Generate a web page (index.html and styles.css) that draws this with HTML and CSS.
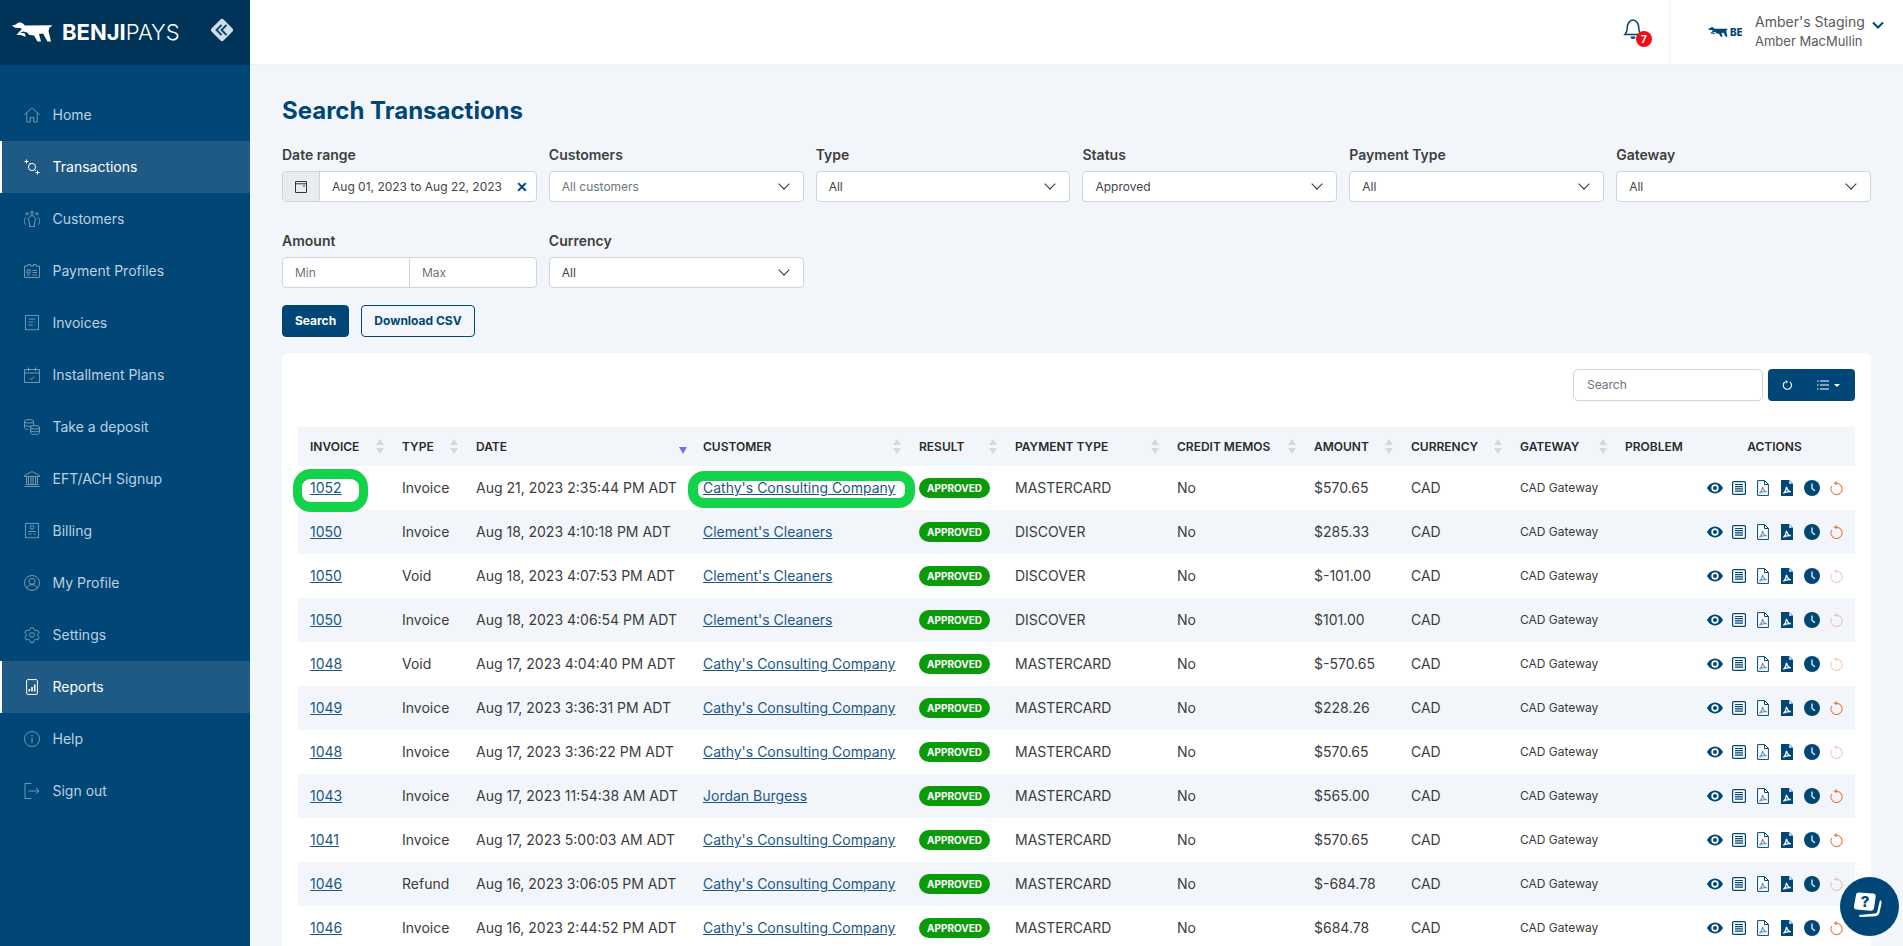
FILE: index.html
```html
<!DOCTYPE html>
<html lang="en">
<head>
<meta charset="utf-8">
<title>Search Transactions</title>
<link rel="stylesheet" href="styles.css">
</head>
<body>
<svg class="defs" width="0" height="0" aria-hidden="true">
  <symbol id="dog" viewBox="0 0 40 20"><path d="M0 3.5 4 2.6 5.5 1 8.5.2 11 1.4 13 3.6 39.500 3.300 40 4 37.500 5.500 36.500 9 39 19.500 35.500 19.500 31 11.500 27 12 29 19.500 25.500 19.500 22 13.500 17.500 13 15 10.500 11.500 9.500 8 10.500 13 11.500 13.500 15 11.500 14 8.500 13 4.500 13 8 9 10 7 8 6 3 5.800Z"/></symbol>
  <symbol id="i-eye" viewBox="0 0 16 12"><path d="M8 .5C4.500.5 1.700 2.600 0 6c1.700 3.400 4.500 5.500 8 5.500s6.300-2.100 8-5.500C14.300 2.600 11.500.5 8 .5Zm0 9.200A3.700 3.700 0 1 1 8 2.300a3.700 3.700 0 0 1 0 7.400Zm0-5.700a2 2 0 1 0 0 4 2 2 0 0 0 0-4Z"/></symbol>
  <symbol id="i-list" viewBox="0 0 14 14"><rect x=".6" y=".6" width="12.800" height="12.800" rx="1" fill="#fff" stroke="currentColor" stroke-width="1.200"/><path d="M3 3.500h8M3 5.700h8M3 7.900h8M3 10.100h8" stroke="currentColor" stroke-width="1.200"/></symbol>
  <symbol id="i-pdf" viewBox="0 0 12 16"><path d="M.6.6h7l3.800 3.800v11H.6Z" fill="#fff" stroke="currentColor"/><path d="M7.500.6v3.900h3.900" fill="none" stroke="currentColor"/><path d="M2.300 13.300c1.500-1 2.700-3.500 3.200-6.500.5 2.500 2 4.500 4.300 5-2.300-.3-5.300 0-7.500 1.500Z" fill="none" stroke="#7d95ab" stroke-width="1.200"/></symbol>
  <symbol id="i-pdf2" viewBox="0 0 12 16"><path d="M0 0h8l4 4v12H0Z" fill="currentColor"/><path d="M8.200.8v3h3" fill="#fff"/><path d="M2.300 13.300c1.500-1 2.700-3.500 3.200-6.500.5 2.500 2 4.500 4.300 5-2.300-.3-5.300 0-7.500 1.500Z" fill="none" stroke="#fff" stroke-width="1.300"/></symbol>
  <symbol id="i-clock" viewBox="0 0 16 16"><circle cx="8" cy="8" r="8" fill="currentColor"/><path d="M8 3.500v5l3 2.200" fill="none" stroke="#fff" stroke-width="1.200"/></symbol>
  <symbol id="i-undo" viewBox="0 0 13 14"><path d="M6.500 2.300a5.600 5.600 0 1 1-4.800 2.800" fill="none" stroke="#f0764a" stroke-width="1.100"/><path d="M6.800 0v4.300L3.500 2.200Z" fill="#f0764a"/></symbol>
  <symbol id="n-home" viewBox="0 0 16 16"><path d="M.5 7.800 8 .8l7.500 7M2.800 6v9h3.400v-4.500h3.600V15h3.400V6" fill="none" stroke="currentColor" stroke-width=".8"/></symbol>
  <symbol id="n-tx" viewBox="0 0 16 16"><circle cx="8" cy="8" r="3.600" fill="none" stroke="currentColor"/><path d="M.5 2.500h4M2.500.5v4M11.500 13.500h4M13.500 11.500v4M5 4l.6.700M11 11l.6.600" fill="none" stroke="currentColor"/></symbol>
  <symbol id="n-cust" viewBox="0 0 16 16"><g fill="none" stroke="currentColor" stroke-width=".8"><circle cx="8" cy="1.800" r="1.400"/><circle cx="3" cy="2.800" r="1.100"/><circle cx="13" cy="2.800" r="1.100"/><path d="M5.500 15.500V12L4.600 9a3.500 3.500 0 1 1 6.800 0l-.9 3v3.500ZM2.300 6C.3 8-.3 11 1.500 13.500M13.700 6c2 2 2.600 5 .8 7.500"/></g></symbol>
  <symbol id="n-card" viewBox="0 0 16 14"><g fill="none" stroke="currentColor" stroke-width=".8"><path d="M.5 2h3.500V.5h2.500V2h3V.5h2.500V2h3.500v11.500H.5Z"/><rect x="3" y="6" width="3" height="3"/><path d="M3 11h3M8.500 6.500h4.500M8.500 8.500h4.500M8.500 11h4.500"/></g></symbol>
  <symbol id="n-inv" viewBox="0 0 14 16"><g fill="none" stroke="currentColor" stroke-width=".8"><path d="M.5.500h13V15l-1.600-.8-1.700.8-1.600-.8-1.600.8-1.600-.8-1.700.8-1.600-.8-1.600.8Z"/><path d="M3.500 4h7M3.500 7h4.500M9.500 7h1M3.500 10h4.500M9.500 10h1"/></g></symbol>
  <symbol id="n-cal" viewBox="0 0 16 16"><g fill="none" stroke="currentColor" stroke-width=".8"><path d="M.5 2.500h15v13H.5ZM.5 6h15M4.500.5v3.500M11.500.5v3.500"/><path d="m5.800 11 1.500 1.500 3-3"/></g></symbol>
  <symbol id="n-coins" viewBox="0 0 16 16"><g fill="none" stroke="currentColor" stroke-width=".8"><ellipse cx="5" cy="2.300" rx="4.500" ry="1.800"/><path d="M.5 2.300v6.400c0 1 1.500 1.800 3.500 1.800M9.500 2.300v4M.5 5.500c0 1 1.500 1.800 4.500 1.800 1.200 0 2-.2 2.500-.4"/><ellipse cx="11" cy="8.300" rx="4.500" ry="1.800"/><path d="M6.500 8.300v5.400c0 1 2 1.800 4.500 1.800s4.500-.8 4.500-1.800V8.300M6.500 11c0 1 2 1.800 4.500 1.800s4.500-.8 4.500-1.800"/></g></symbol>
  <symbol id="n-bank" viewBox="0 0 16 16"><g fill="none" stroke="currentColor" stroke-width=".8"><path d="M.5 4.500 8 .5l7.500 4v1H.5ZM.5 15.500h15M1.500 13.500h13"/><path d="M2.500 6v7M4.500 6v7M7 6v7M9 6v7M11.500 6v7M13.500 6v7"/></g></symbol>
  <symbol id="n-bill" viewBox="0 0 14 16"><g fill="none" stroke="currentColor" stroke-width=".8"><path d="M.5.500h13V15l-1.600-.8-1.700.8-1.600-.8-1.600.8-1.600-.8-1.700.8-1.600-.8-1.600.8Z"/><circle cx="7" cy="4.500" r="1.800"/><path d="M3 8.500h8M3.500 11h3M8.500 11h2"/></g></symbol>
  <symbol id="n-user" viewBox="0 0 16 16"><g fill="none" stroke="currentColor" stroke-width=".8"><circle cx="8" cy="8" r="7.500"/><circle cx="8" cy="6.300" r="3"/><path d="M3 13.500c.5-2.800 2.500-3.800 5-3.800s4.500 1 5 3.800"/></g></symbol>
  <symbol id="n-gear" viewBox="0 0 16 16"><g fill="none" stroke="currentColor" stroke-width=".8"><path d="m6.500.8 3 0 .5 2 1.800 1 2-.6 1.400 2.600-1.500 1.400v1.800l1.500 1.400-1.400 2.600-2-.6-1.800 1-.5 2h-3l-.5-2-1.800-1-2 .6-1.400-2.600 1.500-1.400V7.200L.8 5.800l1.400-2.600 2 .6 1.800-1Z"/><circle cx="8" cy="8" r="2.400"/></g></symbol>
  <symbol id="n-rep" viewBox="0 0 12 16"><rect x=".6" y=".6" width="10.800" height="14.800" rx="1.200" fill="none" stroke="currentColor" stroke-width="1"/><path d="M2.500 10h1.600v2.500H2.500ZM5.200 8h1.600v4.500H5.200ZM7.900 5.500h1.600v7H7.900Z" fill="currentColor"/></symbol>
  <symbol id="n-info" viewBox="0 0 16 16"><g fill="none" stroke="currentColor" stroke-width=".8"><circle cx="8" cy="8" r="7.500"/><path d="M8 7v5M8 4v1.400" stroke-width="1"/></g></symbol>
  <symbol id="n-out" viewBox="0 0 15 16"><path d="M7 .5H.5v15H7M4 8h10.500M11.500 5l3 3-3 3" fill="none" stroke="currentColor" stroke-width=".8"/></symbol>
</svg>

<aside class="sidebar">
  <div class="brand">
    <svg class="brand-dog"><use href="#dog"/></svg>
    <span class="brand-name"><b>BENJI</b>PAYS</span>
    <span class="brand-toggle">
      <svg viewBox="0 0 24 24" width="24" height="24"><rect x="3.500" y="3.500" width="17" height="17" rx="2.500" transform="rotate(45 12 12)" fill="#d3dde6"/><path d="M11.500 7 6.500 12l5 5M16.500 7 11.500 12l5 5" fill="none" stroke="#004777" stroke-width="1.800"/></svg>
    </span>
  </div>
  <nav class="nav">
    <a class="nav-item"><svg class="nav-icon"><use href="#n-home"/></svg>Home</a>
    <a class="nav-item active"><svg class="nav-icon"><use href="#n-tx"/></svg>Transactions</a>
    <a class="nav-item"><svg class="nav-icon"><use href="#n-cust"/></svg>Customers</a>
    <a class="nav-item"><svg class="nav-icon"><use href="#n-card"/></svg>Payment Profiles</a>
    <a class="nav-item"><svg class="nav-icon"><use href="#n-inv"/></svg>Invoices</a>
    <a class="nav-item"><svg class="nav-icon"><use href="#n-cal"/></svg>Installment Plans</a>
    <a class="nav-item"><svg class="nav-icon"><use href="#n-coins"/></svg>Take a deposit</a>
    <a class="nav-item"><svg class="nav-icon"><use href="#n-bank"/></svg>EFT/ACH Signup</a>
    <a class="nav-item"><svg class="nav-icon"><use href="#n-bill"/></svg>Billing</a>
    <a class="nav-item"><svg class="nav-icon"><use href="#n-user"/></svg>My Profile</a>
    <a class="nav-item"><svg class="nav-icon"><use href="#n-gear"/></svg>Settings</a>
    <a class="nav-item active"><svg class="nav-icon"><use href="#n-rep"/></svg>Reports</a>
    <a class="nav-item"><svg class="nav-icon"><use href="#n-info"/></svg>Help</a>
    <a class="nav-item"><svg class="nav-icon"><use href="#n-out"/></svg>Sign out</a>
  </nav>
</aside>

<div class="main">
  <header class="topbar">
    <div class="bell">
      <svg viewBox="0 0 20 22" width="20" height="22"><path d="M2 16.500c1.500-1.500 2.200-3 2.200-6.500 0-4 2.300-8 5.800-8s5.800 4 5.800 8c0 3.500.7 5 2.200 6.500Z" fill="none" stroke="#004777" stroke-width="1.500"/><path d="M7.500 18.500a2.500 2.500 0 0 0 5 0Z" fill="#004777"/></svg>
      <span class="bell-badge">7</span>
    </div>
    <div class="account">
      <div class="mini-logo"><svg class="mini-dog"><use href="#dog"/></svg><span class="mini-name">BEN</span></div>
      <div class="account-names"><span class="account-org">Amber's Staging</span><span class="account-user">Amber MacMullin</span></div>
      <svg class="account-chevron" viewBox="0 0 12 8" width="12" height="8"><path d="m1 1.500 5 5 5-5" fill="none" stroke="#004777" stroke-width="2"/></svg>
    </div>
  </header>

  <main class="content">
    <h1 class="title">Search Transactions</h1>
    <div class="filters">
      <div class="field">
        <label class="label">Date range</label>
        <div class="date-group">
          <span class="date-addon"><svg viewBox="0 0 12 13" width="12" height="13"><path d="M.5 1.500h11v11H.5ZM.5 3.800h11M8 6h2" fill="none" stroke="#333" stroke-width="1"/></svg></span>
          <span class="date-value">Aug 01, 2023 to Aug 22, 2023</span>
          <span class="date-clear">✕</span>
        </div>
      </div>
      <div class="field"><label class="label">Customers</label><div class="select muted">All customers</div></div>
      <div class="field"><label class="label">Type</label><div class="select">All</div></div>
      <div class="field"><label class="label">Status</label><div class="select">Approved</div></div>
      <div class="field"><label class="label">Payment Type</label><div class="select">All</div></div>
      <div class="field"><label class="label">Gateway</label><div class="select">All</div></div>
      <div class="field">
        <label class="label">Amount</label>
        <div class="range"><span class="range-part">Min</span><span class="range-part">Max</span></div>
      </div>
      <div class="field"><label class="label">Currency</label><div class="select">All</div></div>
    </div>
    <div class="buttons">
      <button class="btn btn-primary">Search</button>
      <button class="btn btn-outline">Download CSV</button>
    </div>

    <section class="card">
      <div class="toolbar">
        <div class="search">Search</div>
        <div class="tool-group">
          <svg viewBox="0 0 12 12" width="11" height="11"><path d="M8.500 2A4.500 4.500 0 1 1 3 2.200" fill="none" stroke="#fff" stroke-width="1.200"/><path d="M5.500 0v4L8 2Z" fill="#fff" transform="translate(-1.500 0)"/></svg>
          <span class="tool-list">
            <svg viewBox="0 0 12 10" width="12" height="10"><path d="M0 1h1.500M0 5h1.500M0 9h1.500M3 1h9M3 5h9M3 9h9" stroke="#fff" stroke-width="1.200"/></svg>
            <i class="caret"></i>
          </span>
        </div>
      </div>
      <table class="table">
        <colgroup>
          <col class="c1"><col class="c2"><col class="c3"><col class="c4"><col class="c5"><col class="c6"><col class="c7"><col class="c8"><col class="c9"><col class="c10"><col class="c11"><col class="c12">
        </colgroup>
        <thead>
          <tr>
            <th class="sort">Invoice</th><th class="sort">Type</th><th class="sort-desc">Date</th><th class="sort">Customer</th><th class="sort">Result</th><th class="sort">Payment Type</th><th class="sort">Credit Memos</th><th class="sort">Amount</th><th class="sort">Currency</th><th class="sort">Gateway</th><th>Problem</th><th class="center">Actions</th>
          </tr>
        </thead>
        <tbody>
          <tr>
            <td class="ringed"><a href="#">1052</a><span class="ring ring-inv"></span></td><td>Invoice</td><td>Aug 21, 2023 2:35:44 PM ADT</td><td class="ringed"><a href="#">Cathy's Consulting Company</a><span class="ring ring-cust"></span></td><td><span class="badge">Approved</span></td><td>MASTERCARD</td><td>No</td><td>$570.65</td><td>CAD</td><td class="gw">CAD Gateway</td><td></td>
            <td><div class="acts"><svg class="a-eye"><use href="#i-eye"/></svg><svg class="a-list"><use href="#i-list"/></svg><svg class="a-pdf"><use href="#i-pdf"/></svg><svg class="a-pdf"><use href="#i-pdf2"/></svg><svg class="a-clock"><use href="#i-clock"/></svg><svg class="a-undo"><use href="#i-undo"/></svg></div></td>
          </tr>
          <tr>
            <td><a href="#">1050</a></td><td>Invoice</td><td>Aug 18, 2023 4:10:18 PM ADT</td><td><a href="#">Clement's Cleaners</a></td><td><span class="badge">Approved</span></td><td>DISCOVER</td><td>No</td><td>$285.33</td><td>CAD</td><td class="gw">CAD Gateway</td><td></td>
            <td><div class="acts"><svg class="a-eye"><use href="#i-eye"/></svg><svg class="a-list"><use href="#i-list"/></svg><svg class="a-pdf"><use href="#i-pdf"/></svg><svg class="a-pdf"><use href="#i-pdf2"/></svg><svg class="a-clock"><use href="#i-clock"/></svg><svg class="a-undo"><use href="#i-undo"/></svg></div></td>
          </tr>
          <tr>
            <td><a href="#">1050</a></td><td>Void</td><td>Aug 18, 2023 4:07:53 PM ADT</td><td><a href="#">Clement's Cleaners</a></td><td><span class="badge">Approved</span></td><td>DISCOVER</td><td>No</td><td>$-101.00</td><td>CAD</td><td class="gw">CAD Gateway</td><td></td>
            <td><div class="acts"><svg class="a-eye"><use href="#i-eye"/></svg><svg class="a-list"><use href="#i-list"/></svg><svg class="a-pdf"><use href="#i-pdf"/></svg><svg class="a-pdf"><use href="#i-pdf2"/></svg><svg class="a-clock"><use href="#i-clock"/></svg><svg class="a-undo dim"><use href="#i-undo"/></svg></div></td>
          </tr>
          <tr>
            <td><a href="#">1050</a></td><td>Invoice</td><td>Aug 18, 2023 4:06:54 PM ADT</td><td><a href="#">Clement's Cleaners</a></td><td><span class="badge">Approved</span></td><td>DISCOVER</td><td>No</td><td>$101.00</td><td>CAD</td><td class="gw">CAD Gateway</td><td></td>
            <td><div class="acts"><svg class="a-eye"><use href="#i-eye"/></svg><svg class="a-list"><use href="#i-list"/></svg><svg class="a-pdf"><use href="#i-pdf"/></svg><svg class="a-pdf"><use href="#i-pdf2"/></svg><svg class="a-clock"><use href="#i-clock"/></svg><svg class="a-undo dim"><use href="#i-undo"/></svg></div></td>
          </tr>
          <tr>
            <td><a href="#">1048</a></td><td>Void</td><td>Aug 17, 2023 4:04:40 PM ADT</td><td><a href="#">Cathy's Consulting Company</a></td><td><span class="badge">Approved</span></td><td>MASTERCARD</td><td>No</td><td>$-570.65</td><td>CAD</td><td class="gw">CAD Gateway</td><td></td>
            <td><div class="acts"><svg class="a-eye"><use href="#i-eye"/></svg><svg class="a-list"><use href="#i-list"/></svg><svg class="a-pdf"><use href="#i-pdf"/></svg><svg class="a-pdf"><use href="#i-pdf2"/></svg><svg class="a-clock"><use href="#i-clock"/></svg><svg class="a-undo dim"><use href="#i-undo"/></svg></div></td>
          </tr>
          <tr>
            <td><a href="#">1049</a></td><td>Invoice</td><td>Aug 17, 2023 3:36:31 PM ADT</td><td><a href="#">Cathy's Consulting Company</a></td><td><span class="badge">Approved</span></td><td>MASTERCARD</td><td>No</td><td>$228.26</td><td>CAD</td><td class="gw">CAD Gateway</td><td></td>
            <td><div class="acts"><svg class="a-eye"><use href="#i-eye"/></svg><svg class="a-list"><use href="#i-list"/></svg><svg class="a-pdf"><use href="#i-pdf"/></svg><svg class="a-pdf"><use href="#i-pdf2"/></svg><svg class="a-clock"><use href="#i-clock"/></svg><svg class="a-undo"><use href="#i-undo"/></svg></div></td>
          </tr>
          <tr>
            <td><a href="#">1048</a></td><td>Invoice</td><td>Aug 17, 2023 3:36:22 PM ADT</td><td><a href="#">Cathy's Consulting Company</a></td><td><span class="badge">Approved</span></td><td>MASTERCARD</td><td>No</td><td>$570.65</td><td>CAD</td><td class="gw">CAD Gateway</td><td></td>
            <td><div class="acts"><svg class="a-eye"><use href="#i-eye"/></svg><svg class="a-list"><use href="#i-list"/></svg><svg class="a-pdf"><use href="#i-pdf"/></svg><svg class="a-pdf"><use href="#i-pdf2"/></svg><svg class="a-clock"><use href="#i-clock"/></svg><svg class="a-undo dim"><use href="#i-undo"/></svg></div></td>
          </tr>
          <tr>
            <td><a href="#">1043</a></td><td>Invoice</td><td>Aug 17, 2023 11:54:38 AM ADT</td><td><a href="#">Jordan Burgess</a></td><td><span class="badge">Approved</span></td><td>MASTERCARD</td><td>No</td><td>$565.00</td><td>CAD</td><td class="gw">CAD Gateway</td><td></td>
            <td><div class="acts"><svg class="a-eye"><use href="#i-eye"/></svg><svg class="a-list"><use href="#i-list"/></svg><svg class="a-pdf"><use href="#i-pdf"/></svg><svg class="a-pdf"><use href="#i-pdf2"/></svg><svg class="a-clock"><use href="#i-clock"/></svg><svg class="a-undo"><use href="#i-undo"/></svg></div></td>
          </tr>
          <tr>
            <td><a href="#">1041</a></td><td>Invoice</td><td>Aug 17, 2023 5:00:03 AM ADT</td><td><a href="#">Cathy's Consulting Company</a></td><td><span class="badge">Approved</span></td><td>MASTERCARD</td><td>No</td><td>$570.65</td><td>CAD</td><td class="gw">CAD Gateway</td><td></td>
            <td><div class="acts"><svg class="a-eye"><use href="#i-eye"/></svg><svg class="a-list"><use href="#i-list"/></svg><svg class="a-pdf"><use href="#i-pdf"/></svg><svg class="a-pdf"><use href="#i-pdf2"/></svg><svg class="a-clock"><use href="#i-clock"/></svg><svg class="a-undo"><use href="#i-undo"/></svg></div></td>
          </tr>
          <tr>
            <td><a href="#">1046</a></td><td>Refund</td><td>Aug 16, 2023 3:06:05 PM ADT</td><td><a href="#">Cathy's Consulting Company</a></td><td><span class="badge">Approved</span></td><td>MASTERCARD</td><td>No</td><td>$-684.78</td><td>CAD</td><td class="gw">CAD Gateway</td><td></td>
            <td><div class="acts"><svg class="a-eye"><use href="#i-eye"/></svg><svg class="a-list"><use href="#i-list"/></svg><svg class="a-pdf"><use href="#i-pdf"/></svg><svg class="a-pdf"><use href="#i-pdf2"/></svg><svg class="a-clock"><use href="#i-clock"/></svg><svg class="a-undo dim"><use href="#i-undo"/></svg></div></td>
          </tr>
          <tr>
            <td><a href="#">1046</a></td><td>Invoice</td><td>Aug 16, 2023 2:44:52 PM ADT</td><td><a href="#">Cathy's Consulting Company</a></td><td><span class="badge">Approved</span></td><td>MASTERCARD</td><td>No</td><td>$684.78</td><td>CAD</td><td class="gw">CAD Gateway</td><td></td>
            <td><div class="acts"><svg class="a-eye"><use href="#i-eye"/></svg><svg class="a-list"><use href="#i-list"/></svg><svg class="a-pdf"><use href="#i-pdf"/></svg><svg class="a-pdf"><use href="#i-pdf2"/></svg><svg class="a-clock"><use href="#i-clock"/></svg><svg class="a-undo"><use href="#i-undo"/></svg></div></td>
          </tr>
        </tbody>
      </table>
    </section>
  </main>
</div>

<button class="help" aria-label="Help">
  <svg viewBox="0 0 32 32" width="32" height="32"><path d="M27 10c1.500 1 1.800 2 1.500 3.500l-2 9c-.5 2-1.800 3.500-4 3.800L8 27c-1.500 0-2-1-2-2l16-1.500c1.500-.2 2-.8 2.400-2.500Z" fill="#fff"/><path d="M6 2.500 20 3.500c2 .2 3 1.300 2.700 3.300L21 18c-.3 1.700-1.400 2.800-3.200 2.700L3.500 19.500c-1.800-.2-2.800-1.300-2.500-3.300L3 5c.3-1.700 1.300-2.700 3-2.500Z" fill="#fff"/><text x="12" y="17" class="help-q">?</text></svg>
</button>
</body>
</html>
```
FILE: styles.css
```css
* { box-sizing: border-box; }
html, body { height: 100%; }
body {
  margin: 0;
  display: flex;
  height: 100vh;
  overflow: hidden;
  background: #f2f5f9;
  font-family: Inter, "Liberation Sans", sans-serif;
  font-size: 14px;
  color: #333;
}
.defs { position: absolute; }

/* Sidebar */
.sidebar { width: 250px; flex: none; background: #004777; }
.brand {
  height: 65px;
  background: #003559;
  display: flex;
  align-items: center;
  padding-left: 12px;
  color: #fff;
}
.brand-dog { width: 40px; height: 20px; fill: #fff; flex: none; margin-top: -1px; }
.brand-name { margin-left: 10px; font-size: 22px; font-weight: 300; width: 148px; flex: none; margin-top: -2px; }
.brand-name b { font-weight: 700; }
.brand-toggle { display: flex; margin-top: -6px; }
.nav { padding-top: 24px; display: flex; flex-direction: column; }
.nav-item {
  height: 52px;
  display: flex;
  align-items: center;
  padding: 0 0 1px 24px;
  gap: 12.500px;
  color: #bdd0e0;
  font-weight: 400;
  font-size: 14px;
}
.nav-item.active { background: #1e5a83; color: #fff; border-left: 2px solid #fff; padding-left: 22px; }
.nav-icon { width: 16px; height: 16px; flex: none; color: #8eacc4; }
.active .nav-icon { color: #fff; }

/* Top bar */
.main { flex: 1; min-width: 0; display: flex; flex-direction: column; }
.topbar {
  height: 65px;
  flex: none;
  background: #fff;
  display: flex;
  justify-content: flex-end;
  border-bottom: 1px solid #eef1f5;
}
.bell { width: 72px; position: relative; display: flex; align-items: flex-start; padding: 18px 0 0 26px; }
.bell-badge {
  position: absolute;
  left: 39px;
  top: 31px;
  width: 16px;
  height: 16px;
  border-radius: 50%;
  background: #ee0f1c;
  color: #fff;
  font-size: 10px;
  font-weight: 700;
  line-height: 16px;
  text-align: center;
}
.account {
  width: 234px;
  border-left: 1px solid #eef1f5;
  display: flex;
  align-items: center;
  padding-left: 38px;
}
.mini-logo { width: 34px; height: 12px; overflow: hidden; display: flex; align-items: center; gap: 2px; color: #004777; flex: none; }
.mini-dog { width: 20px; height: 10px; fill: #004777; flex: none; }
.mini-name { font-size: 10px; font-weight: 800; }
.account-names { display: flex; flex-direction: column; margin-left: 13px; width: 116px; flex: none; color: #5b5b5b; margin-top: -2px; }
.account-org { font-size: 14px; line-height: 20px; }
.account-user { font-size: 13px; line-height: 19px; }
.account-chevron { margin-top: -15px; margin-left: 1px; flex: none; }

/* Filters */
.content { padding: 31px 32px 0; }
.title { margin: 0; font-size: 24px; line-height: 29px; font-weight: 700; color: #004777; }
.filters {
  margin-top: 21px;
  display: grid;
  grid-template-columns: repeat(6, minmax(0, 1fr));
  column-gap: 12px;
  row-gap: 30px;
}
.label { display: block; font-size: 14px; font-weight: 600; line-height: 17px; margin-bottom: 8px; color: #3f3f3f; }
.select, .date-group, .range {
  height: 31px;
  background: #fff;
  border: 1px solid #ced4da;
  border-radius: 4px;
  font-size: 12px;
  display: flex;
  align-items: center;
}
.select {
  padding-left: 12px;
  position: relative;
  color: #444;
}
.select.muted { color: #6c757d; }
.select::after {
  content: "";
  position: absolute;
  right: 15px;
  top: 8px;
  width: 7px;
  height: 7px;
  border-right: 1.500px solid #333;
  border-bottom: 1.500px solid #333;
  transform: rotate(45deg);
}
.date-group { overflow: hidden; color: #444; }
.date-addon {
  width: 37px;
  height: 100%;
  flex: none;
  background: #e9ecef;
  border-right: 1px solid #ced4da;
  display: flex;
  align-items: center;
  justify-content: center;
}
.date-value { margin-left: 12px; white-space: nowrap; }
.date-clear { margin-left: auto; margin-right: 8px; color: #004777; font-weight: 800; font-size: 14px; }
.range-part { flex: 1; padding-left: 12px; color: #6c757d; line-height: 29px; }
.range-part + .range-part { border-left: 1px solid #ced4da; }
.buttons { margin-top: 17px; display: flex; gap: 12px; }
.btn {
  height: 32px;
  border-radius: 4px;
  font-family: inherit;
  font-size: 12px;
  font-weight: 700;
  padding: 0 0 1px;
}
.btn-primary { width: 67px; background: #004777; color: #fff; border: 1px solid #004777; }
.btn-outline { width: 114px; background: transparent; color: #004777; border: 1px solid #004777; }

/* Card and table */
.card { margin-top: 16px; background: #fff; border-radius: 6px; padding: 16px; }
.toolbar { display: flex; justify-content: flex-end; gap: 5px; margin-bottom: 26px; }
.search {
  width: 190px;
  height: 32px;
  border: 1px solid #ced4da;
  border-radius: 5px;
  padding-left: 13px;
  line-height: 30px;
  font-size: 12px;
  color: #6c757d;
}
.tool-group {
  width: 87px;
  height: 32px;
  border-radius: 4px;
  background: #004777;
  display: flex;
  align-items: center;
  padding-left: 14px;
}
.tool-list { display: flex; align-items: center; gap: 5px; margin-left: 24px; }
.caret { width: 0; height: 0; border-left: 3px solid transparent; border-right: 3px solid transparent; border-top: 3px solid #fff; }
.table { width: 100%; table-layout: fixed; border-collapse: collapse; }
.c1 { width: 92px; } .c2 { width: 74px; } .c3 { width: 227px; } .c4 { width: 216px; }
.c5 { width: 96px; } .c6 { width: 162px; } .c7 { width: 137px; } .c8 { width: 97px; }
.c9 { width: 109px; } .c10 { width: 105px; } .c11 { width: 74px; } .c12 { width: 168px; }
th {
  height: 39px;
  padding: 0 12px;
  background: #f2f5f9;
  text-align: left;
  text-transform: uppercase;
  font-size: 12px;
  font-weight: 600;
  color: #2b2b2b;
  white-space: nowrap;
  position: relative;
}
th.center { text-align: center; padding-left: 7px; padding-right: 0; }
.sort::before, .sort::after, .sort-desc::after {
  content: "";
  position: absolute;
  right: 6px;
  border-left: 4px solid transparent;
  border-right: 4px solid transparent;
}
.sort::before { top: 12px; border-bottom: 6px solid #d5d8dc; }
.sort::after { top: 21px; border-top: 6px solid #d5d8dc; }
.sort-desc::after { right: 4px; top: 20px; border-top: 7px solid #7474d6; }
td {
  height: 44px;
  padding: 0 12px 1px;
  white-space: nowrap;
  color: #3c3c3c;
  font-size: 14px;
}
tbody tr:nth-child(even) td { background: #f2f5f9; }
td a { color: #1c5884; text-decoration: underline; }
.gw { font-size: 12px; }
.badge {
  display: inline-block;
  width: 71px;
  height: 20px;
  border-radius: 10px;
  background: #0a9a0a;
  color: #fff;
  font-size: 10px;
  font-weight: 700;
  line-height: 20px;
  text-align: center;
  text-transform: uppercase;
}
.acts { display: flex; align-items: center; margin-left: 8px; color: #004777; }
.acts svg { flex: none; }
.a-eye { width: 16px; height: 12px; margin-right: 9px; fill: #004777; }
.a-list { width: 14px; height: 14px; margin-right: 11px; }
.a-pdf { width: 12px; height: 16px; margin-right: 12px; }
.a-clock { width: 16px; height: 16px; margin-left: -1px; margin-right: 10px; }
.a-undo { width: 13px; height: 14px; }
.a-undo.dim { opacity: .38; }
.ringed { position: relative; }
.ring { position: absolute; border-style: solid; border-color: #12d34a; pointer-events: none; }
.ring-inv { left: -5px; top: 3px; width: 75px; height: 43px; border-width: 10px 9px; border-radius: 18px; }
.ring-cust { left: -3px; top: 5px; width: 227px; height: 37px; border-width: 10px; border-radius: 16px; }

/* Help bubble */
.help {
  position: fixed;
  left: 1839.500px;
  top: 876.500px;
  width: 59px;
  height: 59px;
  border-radius: 50%;
  border: 0;
  background: #004777;
  display: flex;
  align-items: center;
  justify-content: center;
  padding: 0;
}
.help-q { font-family: Inter, sans-serif; font-size: 15px; font-weight: 800; fill: #004777; text-anchor: middle; }
```
